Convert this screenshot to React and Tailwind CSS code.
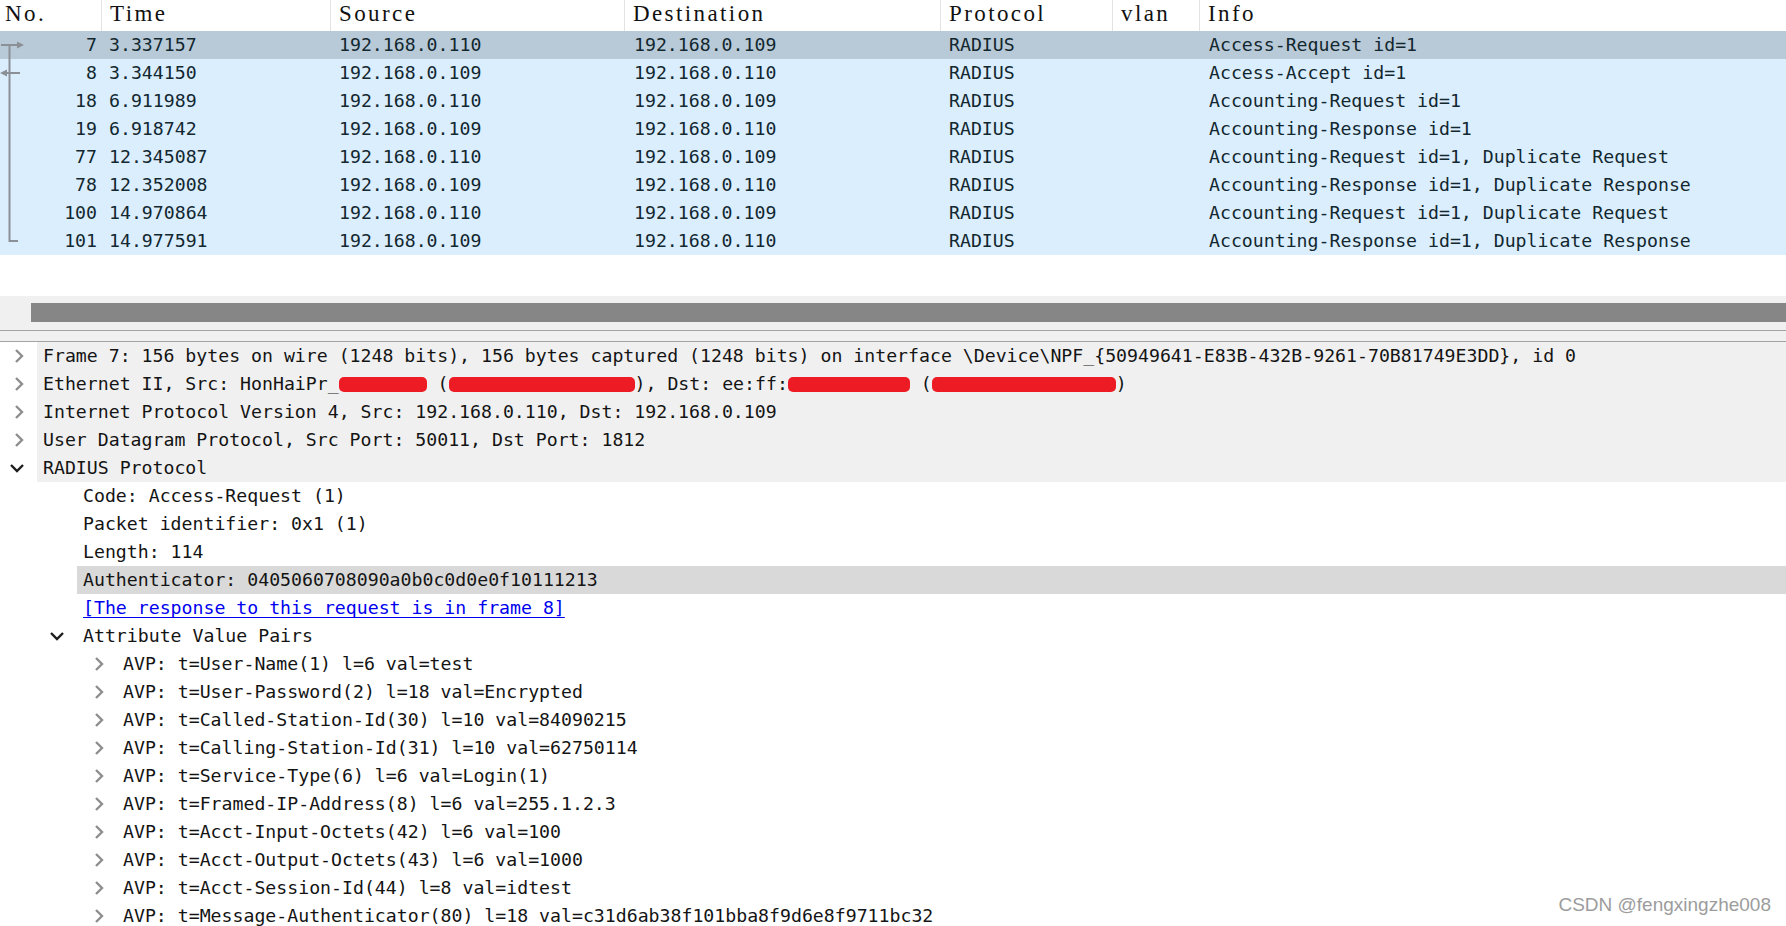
const packets = [
  ["7", "3.337157", "192.168.0.110", "192.168.0.109", "RADIUS", "Access-Request id=1"],
  ["8", "3.344150", "192.168.0.109", "192.168.0.110", "RADIUS", "Access-Accept id=1"],
  ["18", "6.911989", "192.168.0.110", "192.168.0.109", "RADIUS", "Accounting-Request id=1"],
  ["19", "6.918742", "192.168.0.109", "192.168.0.110", "RADIUS", "Accounting-Response id=1"],
  ["77", "12.345087", "192.168.0.110", "192.168.0.109", "RADIUS", "Accounting-Request id=1, Duplicate Request"],
  ["78", "12.352008", "192.168.0.109", "192.168.0.110", "RADIUS", "Accounting-Response id=1, Duplicate Response"],
  ["100", "14.970864", "192.168.0.110", "192.168.0.109", "RADIUS", "Accounting-Request id=1, Duplicate Request"],
  ["101", "14.977591", "192.168.0.109", "192.168.0.110", "RADIUS", "Accounting-Response id=1, Duplicate Response"]
];

const avps = [
  "AVP: t=User-Name(1) l=6 val=test",
  "AVP: t=User-Password(2) l=18 val=Encrypted",
  "AVP: t=Called-Station-Id(30) l=10 val=84090215",
  "AVP: t=Calling-Station-Id(31) l=10 val=62750114",
  "AVP: t=Service-Type(6) l=6 val=Login(1)",
  "AVP: t=Framed-IP-Address(8) l=6 val=255.1.2.3",
  "AVP: t=Acct-Input-Octets(42) l=6 val=100",
  "AVP: t=Acct-Output-Octets(43) l=6 val=1000",
  "AVP: t=Acct-Session-Id(44) l=8 val=idtest",
  "AVP: t=Message-Authenticator(80) l=18 val=c31d6ab38f101bba8f9d6e8f9711bc32"
];

const cols = "grid grid-cols-[102px_229px_294px_316px_172px_87px_1fr]";
const mono = "font-['DejaVu_Sans_Mono',monospace] text-[18.2px]";

function Chevron({ open }) {
  if (open) {
    return (
      <svg className="mr-[3px]" width="16" height="10" viewBox="0 0 16 10">
        <path d="M2 2 L8 8 L14 2" fill="none" stroke="#1c1c1c" strokeWidth="2.4" />
      </svg>
    );
  }
  return (
    <svg width="10" height="16" viewBox="0 0 10 16">
      <path d="M2 2 L8 8 L2 14" fill="none" stroke="#8e8e8e" strokeWidth="2.4" />
    </svg>
  );
}

function Redact({ w }) {
  return <span className="inline-block h-[15px] align-middle rounded-[5px] bg-[#ed1c24]" style={{ width: w }} />;
}

function TreeRow({ level = 0, toggle, shaded, children }) {
  const indent = ["pl-0", "pl-[40px]", "pl-[80px]"][level];
  return (
    <div className={`flex h-[28px] items-stretch ${indent}`}>
      <div className="flex w-[37px] shrink-0 items-center justify-center">
        {toggle && <Chevron open={toggle === "open"} />}
      </div>
      <div
        className={`flex flex-1 items-center whitespace-pre pl-[6px] text-[#141414] ${mono} ${
          shaded === "level0" ? "bg-[#f0f0f0]" : shaded === "sel" ? "bg-[#d9d9d9]" : ""
        }`}
      >
        {children}
      </div>
    </div>
  );
}

export default function App() {
  return (
    <div className="relative h-[926px] w-[1786px] overflow-hidden bg-white">
      {/* packet list */}
      <div className={`${cols} h-[31px] items-center bg-white font-['Liberation_Serif',serif] text-[23px] tracking-[2.4px] text-[#111]`}>
        {["No.", "Time", "Source", "Destination", "Protocol", "vlan", "Info"].map((h, i) => (
          <div key={h} className={`h-full leading-[28px] ${i === 0 ? "pl-[5px]" : "pl-[8px]"} ${i < 6 ? "border-r border-[#e3e3e3]" : ""}`}>
            {h}
          </div>
        ))}
      </div>
      <div className="relative">
        {packets.map((p, r) => (
          <div
            key={p[0]}
            className={`${cols} h-[28px] items-center text-[#12272e] ${mono} ${r === 0 ? "bg-[#b8cad8]" : "bg-[#daeefe]"}`}
          >
            <div className="pr-[5px] text-right">{p[0]}</div>
            <div className="pl-[7px]">{p[1]}</div>
            <div className="pl-[8px]">{p[2]}</div>
            <div className="pl-[9px]">{p[3]}</div>
            <div className="pl-[8px]">{p[4]}</div>
            <div />
            <div className="pl-[9px] whitespace-pre">{p[5]}</div>
          </div>
        ))}
        <svg className="absolute left-0 top-0" width="30" height="224" viewBox="0 0 30 224">
          <g stroke="#8b9096" strokeWidth="2" fill="none">
            <path d="M9.5 14 V210 H18" />
            <path d="M1 14 H18" />
            <path d="M4 42 H20" />
          </g>
          <path d="M24 14 L17 10.5 L17 17.5 Z" fill="#8b9096" />
          <path d="M0 42 L7 38.5 L7 45.5 Z" fill="#8b9096" />
        </svg>
      </div>
      <div className="h-[41px] bg-white" />

      {/* horizontal scrollbar */}
      <div className="h-[34px] bg-[#f0f0f0] pl-[31px] pt-[7px]">
        <div className="h-[19px] bg-[#868686]" />
      </div>
      <div className="h-[12px] border-y border-[#a3a3a3] bg-[#f0f0f0]" />

      {/* packet details */}
      <div>
        <TreeRow toggle="closed" shaded="level0">
          Frame 7: 156 bytes on wire (1248 bits), 156 bytes captured (1248 bits) on interface \Device\NPF_{"{"}50949641-E83B-432B-9261-70B81749E3DD{"}"}, id 0
        </TreeRow>
        <TreeRow toggle="closed" shaded="level0">
          Ethernet II, Src: HonHaiPr_<Redact w={88} /> (<Redact w={186} />), Dst: ee:ff:<Redact w={122} /> (<Redact w={184} />)
        </TreeRow>
        <TreeRow toggle="closed" shaded="level0">
          Internet Protocol Version 4, Src: 192.168.0.110, Dst: 192.168.0.109
        </TreeRow>
        <TreeRow toggle="closed" shaded="level0">
          User Datagram Protocol, Src Port: 50011, Dst Port: 1812
        </TreeRow>
        <TreeRow toggle="open" shaded="level0">
          RADIUS Protocol
        </TreeRow>
        <TreeRow level={1}>Code: Access-Request (1)</TreeRow>
        <TreeRow level={1}>Packet identifier: 0x1 (1)</TreeRow>
        <TreeRow level={1}>Length: 114</TreeRow>
        <TreeRow level={1} shaded="sel">
          Authenticator: 0405060708090a0b0c0d0e0f10111213
        </TreeRow>
        <TreeRow level={1}>
          <span className="text-[#0000ee] underline decoration-1 underline-offset-[3px]">[The response to this request is in frame 8]</span>
        </TreeRow>
        <TreeRow level={1} toggle="open">
          Attribute Value Pairs
        </TreeRow>
        {avps.map((a) => (
          <TreeRow key={a} level={2} toggle="closed">
            {a}
          </TreeRow>
        ))}
      </div>

      <div className="absolute bottom-[7px] right-[15px] font-['Liberation_Sans',sans-serif] text-[19px] text-[#9c9c9c] [text-shadow:0_0_2px_#ffffff]">
        CSDN @fengxingzhe008
      </div>
    </div>
  );
}
